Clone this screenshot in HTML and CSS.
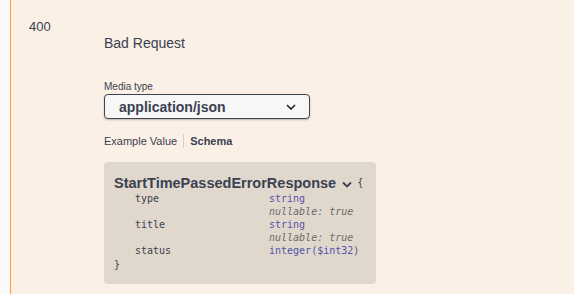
FILE: index.html
```html
<!DOCTYPE html>
<html lang="en">

<head>
    <meta charset="UTF-8">
    <title>Responses</title>
    <link rel="stylesheet" href="styles.css">
</head>

<body>
    <div class="opblock">
        <div class="response">
            <div class="response-status">400</div>
            <div class="response-desc">
                <p class="desc-text">Bad Request</p>
                <div class="media-label">Media type</div>
                <div class="media-select">
                    <span>application/json</span>
                    <svg width="10" height="6" viewBox="0 0 10 6"><path d="M1 1l4 4 4-4" fill="none" stroke="#222" stroke-width="1.6"/></svg>
                </div>
                <div class="tabs">
                    <span class="tab">Example Value</span>
                    <span class="tab tab-active">Schema</span>
                </div>
                <div class="model-box">
                    <div class="model-title">
                        <span>StartTimePassedErrorResponse</span>
                        <svg width="10" height="7" viewBox="0 0 10 7"><path d="M1 1.5l4 4 4-4" fill="none" stroke="#3b4151" stroke-width="1.8"/></svg>
                        <span class="brace">{</span>
                    </div>
                    <div class="prop">
                        <span class="prop-name">type</span>
                        <span class="prop-type">string<br><i class="prop-extra">nullable: true</i></span>
                    </div>
                    <div class="prop">
                        <span class="prop-name">title</span>
                        <span class="prop-type">string<br><i class="prop-extra">nullable: true</i></span>
                    </div>
                    <div class="prop">
                        <span class="prop-name">status</span>
                        <span class="prop-type">integer($int32)</span>
                    </div>
                    <div class="brace brace-close">}</div>
                </div>
            </div>
        </div>
        <div class="response">
            <div class="response-status">404</div>
        </div>
    </div>
</body>

</html>
```

FILE: styles.css
```css
body {
    margin: 0;
    background: #fafafa;
    font-family: "Liberation Sans", Arial, sans-serif;
    color: #3b4151;
}

.opblock {
    margin-left: 10px;
    border-left: 1px solid #fca130;
    background: rgba(252, 161, 48, 0.1);
    height: 294px;
    overflow: hidden;
}

.response {
    display: flex;
    padding: 19px 0 0 18px;
}

.response-status {
    width: 75px;
    flex-shrink: 0;
    font-size: 13px;
    line-height: 16px;
}

.desc-text {
    margin: 16px 0 0;
    font-size: 14px;
    line-height: 16px;
}

.media-label {
    margin-top: 29px;
    font-size: 10px;
    line-height: 13px;
}

.media-select {
    width: 177px;
    height: 23px;
    margin-top: 1px;
    padding: 0 13px 0 14px;
    display: flex;
    align-items: center;
    justify-content: space-between;
    background: #f7f7f7;
    border: 1px solid #41444e;
    border-radius: 4px;
    box-shadow: 0 1px 2px rgba(0, 0, 0, 0.25);
    font-size: 14px;
    font-weight: bold;
}

.tabs {
    margin-top: 15px;
    font-size: 11px;
    line-height: 14px;
    display: flex;
}

.tab {
    padding-right: 6px;
}

.tab-active {
    font-weight: bold;
    padding-left: 6px;
    border-left: 1px solid #d8cfc5;
}

.model-box {
    width: 252px;
    margin-top: 14px;
    padding: 12px 10px 12px;
    background: rgba(0, 0, 0, 0.1);
    border-radius: 4px;
    font-family: "DejaVu Sans Mono", monospace;
    font-size: 10px;
    line-height: 13px;
}

.model-title {
    display: flex;
    align-items: center;
    font-family: "Liberation Sans", Arial, sans-serif;
    font-size: 14.5px;
    font-weight: bold;
    line-height: 18px;
}

.model-title svg {
    margin: 2px 5px 0 6px;
}

.brace {
    font-family: "DejaVu Sans Mono", monospace;
    font-weight: normal;
    font-size: 10px;
    color: #3b4151;
}

.prop {
    display: flex;
}

.prop-name {
    width: 134px;
    padding-left: 21px;
    flex-shrink: 0;
}

.prop-type {
    color: #55a;
}

.prop-extra {
    color: #6b6b6b;
}

.brace-close {
    line-height: 15px;
}
```
